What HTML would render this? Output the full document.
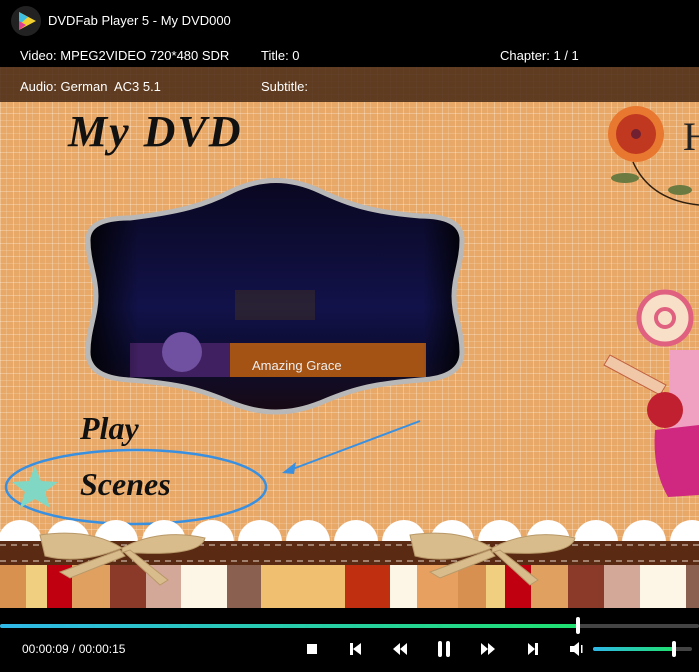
<!DOCTYPE html>
<html><head><meta charset="utf-8"><style>
*{margin:0;padding:0;box-sizing:border-box}
body{width:699px;height:672px;overflow:hidden;background:#000;font-family:"Liberation Sans",sans-serif;position:relative}
.a{position:absolute}
.t{color:#fff;font-size:13px;white-space:nowrap}
.bg{left:0;top:67px;width:699px;height:541px;background-color:#e8a868;
background-image:repeating-linear-gradient(90deg,rgba(255,240,220,.35) 0 1px,transparent 1px 6px,rgba(255,240,220,.2) 6px 7px,transparent 7px 13px),repeating-linear-gradient(0deg,rgba(255,240,220,.35) 0 1px,transparent 1px 6px,rgba(255,240,220,.2) 6px 7px,transparent 7px 13px)}
.scr{font-family:"Liberation Serif",serif;font-style:italic;font-weight:bold;color:#111}
</style></head><body>
<div class="a bg"></div>
<div class="a" style="left:0;top:0;width:699px;height:67px;background:#000"></div>
<div class="a" style="left:0;top:67px;width:699px;height:35px;background:rgba(70,40,20,.85)"></div>
<svg class="a" style="left:10px;top:5px" width="32" height="32" viewBox="0 0 32 32"><circle cx="16" cy="16" r="15" fill="#222"/><path d="M9 7 L26 16 L9 25 Z" fill="#f2d030"/><path d="M9 7 L18 12 L9 20Z" fill="#40c0e0"/><path d="M9 16 L16 20 L9 25Z" fill="#e04090"/></svg>
<div class="a t" style="left:48px;top:13px">DVDFab Player 5 - My DVD000</div>
<div class="a t" style="left:20px;top:48px">Video: MPEG2VIDEO 720*480 SDR</div>
<div class="a t" style="left:261px;top:48px">Title: 0</div>
<div class="a t" style="left:500px;top:48px">Chapter: 1 / 1</div>
<div class="a t" style="left:20px;top:79px">Audio: German&nbsp; AC3 5.1</div>
<div class="a t" style="left:261px;top:79px">Subtitle:</div>

<div class="a scr" style="left:68px;top:106px;font-size:44px;letter-spacing:2px">My DVD</div>

<svg class="a" style="left:0;top:0" width="699" height="608">
<defs><linearGradient id="v" x1="0" y1="0" x2="0" y2="1"><stop offset="0" stop-color="#08061c"/><stop offset=".55" stop-color="#12124a"/><stop offset=".75" stop-color="#0c0c30"/><stop offset="1" stop-color="#1a0a10"/></linearGradient>
<linearGradient id="h" x1="0" y1="0" x2="1" y2="0"><stop offset="0" stop-color="#000"/><stop offset=".15" stop-color="#000" stop-opacity="0"/><stop offset=".88" stop-color="#000" stop-opacity="0"/><stop offset="1" stop-color="#000"/></linearGradient>
<clipPath id="c"><path d="M130 218 C180 212 205 205 232 191 C262 177 290 177 320 191 C350 205 372 212 420 216 Q462 216 462 240 C462 262 454 276 454 296 C454 316 462 330 462 352 Q462 378 420 380 C370 384 350 390 320 403 C290 415 262 415 232 403 C202 390 182 384 130 380 Q88 378 88 352 C88 330 96 316 96 296 C96 276 88 262 88 240 Q88 218 130 218Z"/></clipPath></defs>
<g clip-path="url(#c)">
<rect x="80" y="170" width="390" height="250" fill="url(#v)"/>
<rect x="130" y="343" width="296" height="34" fill="#c06010" opacity=".85"/>
<rect x="130" y="343" width="100" height="34" fill="#402060"/>
<circle cx="182" cy="352" r="20" fill="#7050a0"/>
<rect x="235" y="290" width="80" height="30" fill="#403020" opacity=".5"/>
<rect x="80" y="170" width="390" height="250" fill="url(#h)"/>
</g>
<path d="M130 218 C180 212 205 205 232 191 C262 177 290 177 320 191 C350 205 372 212 420 216 Q462 216 462 240 C462 262 454 276 454 296 C454 316 462 330 462 352 Q462 378 420 380 C370 384 350 390 320 403 C290 415 262 415 232 403 C202 390 182 384 130 380 Q88 378 88 352 C88 330 96 316 96 296 C96 276 88 262 88 240 Q88 218 130 218Z" fill="none" stroke="#b8b8b8" stroke-width="5"/>
<text x="252" y="370" font-family="Liberation Sans" font-size="13" fill="#eee">Amazing Grace</text>
<ellipse cx="136" cy="487" rx="130" ry="37" fill="none" stroke="#3a90e0" stroke-width="2.5"/>
<path d="M35 466 L41 481 L58 482 L45 492 L50 508 L35 499 L20 508 L25 492 L12 482 L29 481Z" fill="#80d8c4"/>
<line x1="420" y1="421" x2="290" y2="470" stroke="#3a90e0" stroke-width="2"/>
<path d="M282 473 L296 462 L294 474Z" fill="#3a90e0"/>
<g fill="#fff">
<circle cx="20" cy="542" r="22"/><circle cx="68" cy="542" r="22"/><circle cx="116" cy="542" r="22"/><circle cx="164" cy="542" r="22"/><circle cx="212" cy="542" r="22"/><circle cx="260" cy="542" r="22"/><circle cx="308" cy="542" r="22"/><circle cx="356" cy="542" r="22"/><circle cx="404" cy="542" r="22"/><circle cx="452" cy="542" r="22"/><circle cx="500" cy="542" r="22"/><circle cx="548" cy="542" r="22"/><circle cx="596" cy="542" r="22"/><circle cx="644" cy="542" r="22"/><circle cx="692" cy="542" r="22"/></g>
<rect x="0" y="541" width="699" height="24" fill="#5a2a12"/>
<line x1="0" y1="545" x2="699" y2="545" stroke="#e8d8c8" stroke-dasharray="6 5"/>
<line x1="0" y1="561" x2="699" y2="561" stroke="#e8d8c8" stroke-dasharray="6 5"/>
<g>
<rect x="0" y="565" width="26" height="43" fill="#d8914e"/><rect x="26" y="565" width="21" height="43" fill="#f0d080"/><rect x="47" y="565" width="25" height="43" fill="#c00010"/><rect x="72" y="565" width="38" height="43" fill="#e0a060"/><rect x="110" y="565" width="36" height="43" fill="#8b3a2a"/><rect x="146" y="565" width="35" height="43" fill="#d4a898"/><rect x="181" y="565" width="46" height="43" fill="#fdf6e6"/><rect x="227" y="565" width="34" height="43" fill="#8a6050"/><rect x="261" y="565" width="84" height="43" fill="#f0c070"/><rect x="345" y="565" width="45" height="43" fill="#c03010"/><rect x="390" y="565" width="27" height="43" fill="#fdf6e6"/><rect x="417" y="565" width="41" height="43" fill="#e8a060"/><rect x="458" y="565" width="28" height="43" fill="#d89050"/><rect x="486" y="565" width="19" height="43" fill="#f0d080"/><rect x="505" y="565" width="26" height="43" fill="#c00010"/><rect x="531" y="565" width="37" height="43" fill="#e0a060"/><rect x="568" y="565" width="36" height="43" fill="#8b3a2a"/><rect x="604" y="565" width="36" height="43" fill="#d4a898"/><rect x="640" y="565" width="46" height="43" fill="#fdf6e6"/><rect x="686" y="565" width="13" height="43" fill="#8a6050"/>
</g>
<g fill="#d8bc8c" stroke="#b89868">
<path d="M40 535 Q90 528 122 548 Q80 565 45 556 Z"/><path d="M122 548 Q160 528 205 538 Q200 558 122 552Z"/><path d="M120 550 L60 572 L70 578 L125 556Z"/><path d="M124 552 L160 585 L168 580 L130 550Z"/>
<path d="M410 535 Q460 528 492 548 Q450 565 415 556 Z"/><path d="M492 548 Q530 528 575 538 Q570 558 492 552Z"/><path d="M490 550 L430 572 L440 578 L495 556Z"/><path d="M494 552 L530 585 L538 580 L500 550Z"/>
</g>
<circle cx="636" cy="134" r="28" fill="#e87830"/><circle cx="636" cy="134" r="20" fill="#c03820"/><circle cx="636" cy="134" r="5" fill="#702030"/>
<path d="M633 162 Q650 200 699 205" fill="none" stroke="#302010" stroke-width="1.5"/>
<ellipse cx="625" cy="178" rx="14" ry="5" fill="#6a7a40"/><ellipse cx="680" cy="190" rx="12" ry="5" fill="#6a7a40"/>
<text x="683" y="150" font-family="Liberation Serif" font-size="40" fill="#222">H</text>
<circle cx="665" cy="318" r="26" fill="#f8e0c8" stroke="#e06080" stroke-width="5"/><circle cx="665" cy="318" r="9" fill="none" stroke="#e06080" stroke-width="4"/>
<path d="M604 365 L660 395 L666 385 L610 355Z" fill="#f0c8a8" stroke="#c06040"/>
<path d="M670 350 L699 350 L699 430 L668 440Z" fill="#f0a0c0"/>
<circle cx="665" cy="410" r="18" fill="#c02030"/>
<path d="M655 430 L699 425 L699 495 L668 497 Q652 470 655 430Z" fill="#d02880"/>
</svg>

<div class="a scr" style="left:80px;top:410px;font-size:32px">Play</div>
<div class="a scr" style="left:80px;top:466px;font-size:32px">Scenes</div>

<div class="a" style="left:0;top:624px;width:699px;height:4px;background:#444;border-radius:2px"></div>
<div class="a" style="left:0;top:624px;width:578px;height:4px;background:linear-gradient(90deg,#30b8e8,#20e070);border-radius:2px"></div>
<div class="a" style="left:576px;top:617px;width:4px;height:17px;background:#fff;border-radius:2px"></div>
<div class="a t" style="left:22px;top:642px;font-size:12px">00:00:09 / 00:00:15</div>
<svg class="a" style="left:300px;top:638px" width="300" height="22" viewBox="0 0 300 22" fill="#fff">
<rect x="7" y="6" width="10" height="10"/>
<rect x="50" y="5" width="3" height="12"/><path d="M61 5 L53 11 L61 17Z"/>
<path d="M100 5 L93 11 L100 17Z M107 5 L100 11 L107 17Z"/>
<rect x="138" y="3" width="4" height="16" rx="2"/><rect x="146" y="3" width="4" height="16" rx="2"/>
<path d="M181 5 L188 11 L181 17Z M188 5 L195 11 L188 17Z"/>
<path d="M228 5 L235 11 L228 17Z"/><rect x="235" y="5" width="3" height="12"/>
<path d="M270 8 L274 8 L279 4 L279 18 L274 14 L270 14Z"/><rect x="281" y="7" width="1.5" height="8"/>
</svg>
<div class="a" style="left:593px;top:647px;width:99px;height:4px;background:#444;border-radius:2px"></div>
<div class="a" style="left:593px;top:647px;width:80px;height:4px;background:linear-gradient(90deg,#30b8e8,#20e070);border-radius:2px"></div>
<div class="a" style="left:672px;top:641px;width:4px;height:16px;background:#fff;border-radius:2px"></div>
</body></html>
